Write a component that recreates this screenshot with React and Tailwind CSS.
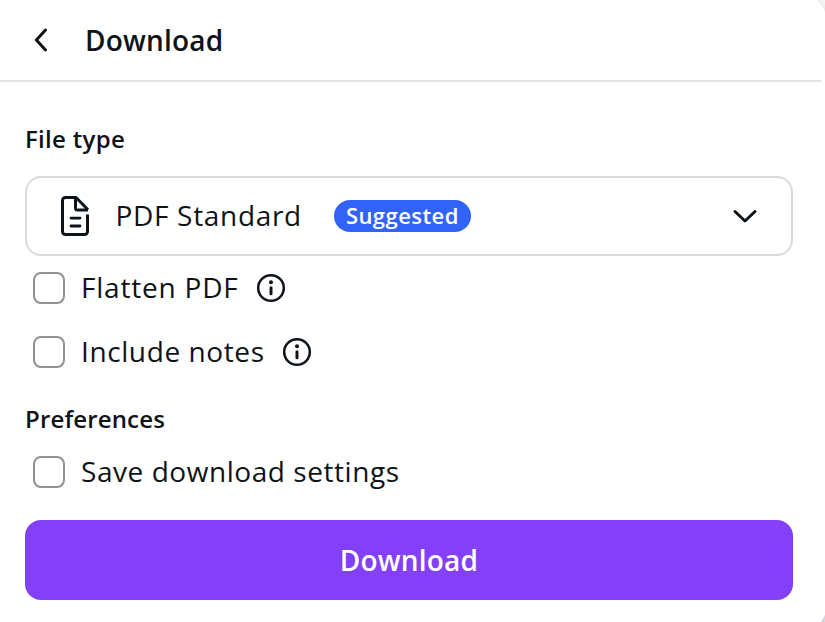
import { useState } from "react";

const InfoIcon = () => (
  <svg width="32" height="32" viewBox="0 0 32 32" fill="none">
    <circle cx="16" cy="16" r="12.8" stroke="#0e1318" strokeWidth="2.5" />
    <circle cx="16" cy="10.2" r="2" fill="#0e1318" />
    <path d="M16 15.8v6" stroke="#0e1318" strokeWidth="3" strokeLinecap="round" />
  </svg>
);

const FileIcon = () => (
  <svg width="32" height="44" viewBox="0 0 32 44" fill="none" stroke="#0e1318" strokeWidth="3" strokeLinejoin="round">
    <path d="M28.5 20.5v17a3 3 0 0 1-3 3h-19a3 3 0 0 1-3-3v-31a3 3 0 0 1 3-3h10.5l12 12.2" />
    <path d="M16.5 3.5v10.5a2 2 0 0 0 2 2h10.5" />
    <path d="M12 24.1h9M12 32h9" strokeWidth="2.8" strokeLinecap="round" />
  </svg>
);

function CheckRow({ label, className, checked, onChange, children }) {
  return (
    <div className="flex h-8 items-center pl-2">
      <input
        type="checkbox"
        checked={checked}
        onChange={onChange}
        className="size-8 shrink-0 appearance-none rounded-lg border-2 border-[#8e9297] bg-white checked:bg-[#8440f9]"
      />
      <span className={className}>{label}</span>
      {children}
    </div>
  );
}

export default function App() {
  const [options, setOptions] = useState({ flatten: false, notes: false, save: false });

  const toggle = (key) => () => {
    setOptions({ ...options, [key]: !options[key] });
  };

  return (
    <div className="h-[622px] w-[825px] overflow-hidden bg-[#f7f7f8] font-['Open_Sans','Noto_Sans',sans-serif] text-[#0e1318]">
      <div className="-mt-1 h-[634px] w-[826px] rounded-r-[22px] bg-white pt-1 shadow-[0_4px_6px_rgba(64,64,90,0.35)]">
        <header className="flex h-[82px] w-[821px] items-center border-b-2 border-[#e3e3e8] pl-[33px]">
          <button aria-label="Back">
            <svg width="16" height="24" viewBox="0 0 16 24" fill="none">
              <path d="M12.5 2 3.4 12l9.1 10" stroke="#0e1318" strokeWidth="3" strokeLinecap="round" strokeLinejoin="round" />
            </svg>
          </button>
          <h1 className="ml-9 text-[28px] leading-10 font-semibold tracking-[0.2px]">Download</h1>
        </header>

        <main className="w-[793px] pl-[25px]">
          <h2 className="pt-[41px] text-2xl leading-8 font-semibold tracking-[0.3px]">File type</h2>

          <button className="mt-[21px] flex h-20 w-full items-center rounded-2xl border-2 border-[#d7dade] pr-8 pl-8">
            <FileIcon />
            <span className="ml-[24.5px] pb-0.5 text-[28px] tracking-[0.68px]">PDF Standard</span>
            <span className="ml-8 flex h-8 w-[137px] items-center justify-center rounded-full bg-[#3263f8] pb-0.5 text-[22px] font-semibold tracking-[0.45px] text-white">
              Suggested
            </span>
            <svg className="ml-auto" width="28" height="16" viewBox="0 0 28 16" fill="none">
              <path d="m4 3.5 10 9.5L24 3.5" stroke="#0e1318" strokeWidth="3" strokeLinecap="round" strokeLinejoin="round" />
            </svg>
          </button>

          <div className="mt-4 flex flex-col gap-8">
            <CheckRow label="Flatten PDF" className="mr-4 ml-4 pb-0.5 text-[28px] tracking-[0.8px]" checked={options.flatten} onChange={toggle("flatten")}>
              <InfoIcon />
            </CheckRow>
            <CheckRow label="Include notes" className="mr-4 ml-4 pb-0.5 text-[28px] tracking-[0.6px]" checked={options.notes} onChange={toggle("notes")}>
              <InfoIcon />
            </CheckRow>
          </div>

          <h2 className="mt-[35px] text-2xl leading-8 font-semibold tracking-[0.15px]">Preferences</h2>
          <div className="mt-[21px]">
            <CheckRow label="Save download settings" className="ml-4 pb-0.5 text-[28px] tracking-[0.55px]" checked={options.save} onChange={toggle("save")} />
          </div>

          <button className="mt-8 h-20 w-full rounded-2xl bg-[#8440f9] text-[28px] font-semibold tracking-[0.2px] text-white">
            Download
          </button>
        </main>
      </div>
    </div>
  );
}
